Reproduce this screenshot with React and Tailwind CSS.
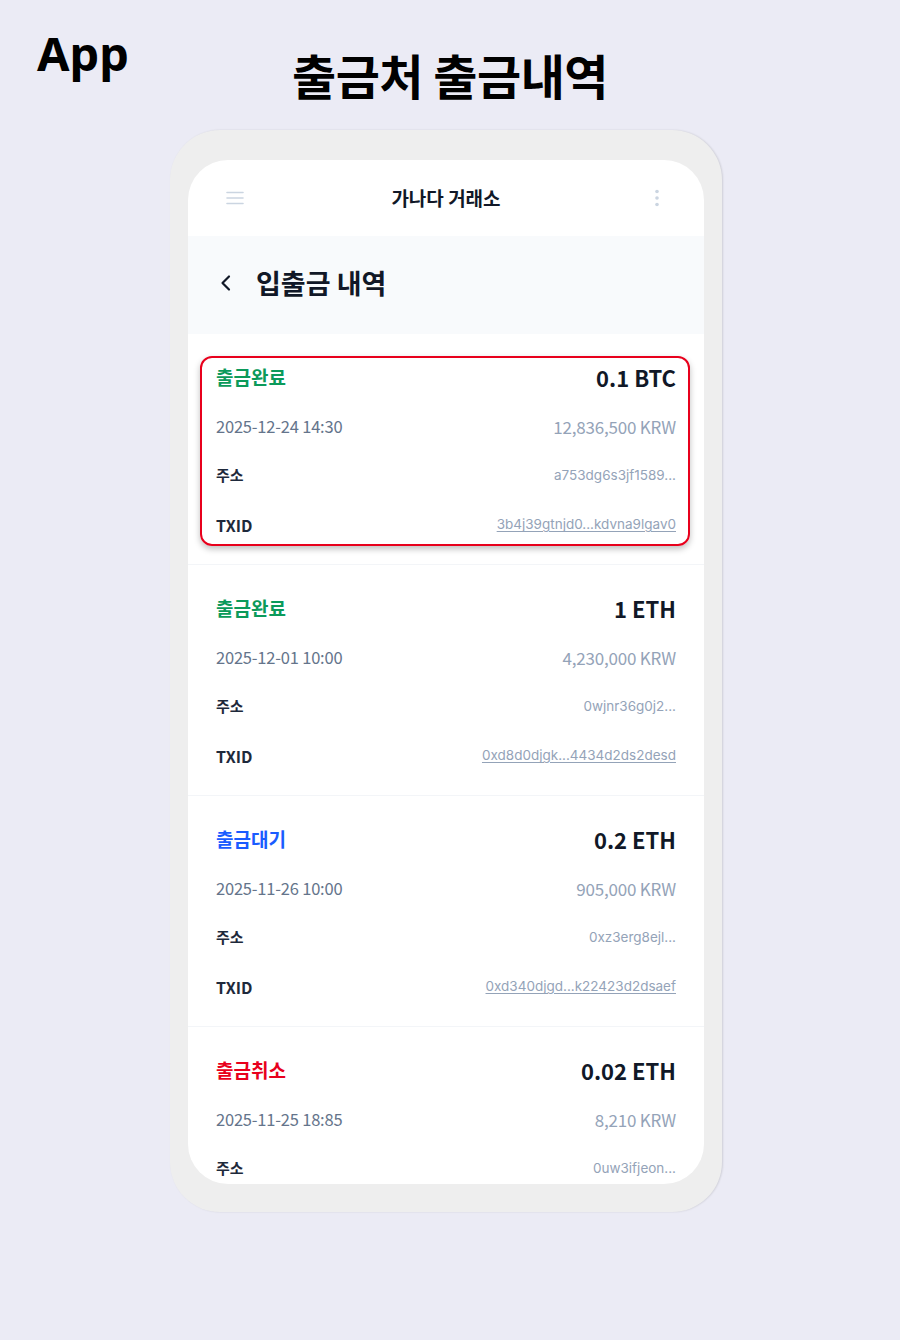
import React from 'react';

const items = [
  {
    status: '출금완료',
    statusClass: 'text-[#0b9a5a]',
    amount: '0.1 BTC',
    date: '2025-12-24 14:30',
    krw: '12,836,500 KRW',
    address: 'a753dg6s3jf1589...',
    txid: '3b4j39gtnjd0...kdvna9lgav0',
    highlight: true,
  },
  {
    status: '출금완료',
    statusClass: 'text-[#0b9a5a]',
    amount: '1 ETH',
    date: '2025-12-01 10:00',
    krw: '4,230,000 KRW',
    address: '0wjnr36g0j2...',
    txid: '0xd8d0djgk...4434d2ds2desd',
  },
  {
    status: '출금대기',
    statusClass: 'text-[#1a5cff]',
    amount: '0.2 ETH',
    date: '2025-11-26 10:00',
    krw: '905,000 KRW',
    address: '0xz3erg8ejl...',
    txid: '0xd340djgd...k22423d2dsaef',
  },
  {
    status: '출금취소',
    statusClass: 'text-[#e8001c]',
    amount: '0.02 ETH',
    date: '2025-11-25 18:85',
    krw: '8,210 KRW',
    address: '0uw3ifjeon...',
    txid: '0xa1b2c3d4...e5f6a7b8c9d0',
  },
];

const kr = "font-['Noto_Sans_CJK_KR',sans-serif]";
const latin = "font-['Inter','Noto_Sans_CJK_KR',sans-serif]";

const HistoryItem = ({ item }) => (
  <div className="relative px-7 pt-[19px] pb-[15px] border-b border-[#f3f5f8]">
    {item.highlight && (
      <div className="absolute left-3 right-[14px] top-[22px] bottom-[18px] rounded-xl border-2 border-[#e8001c] shadow-[0_3px_6px_rgba(0,0,0,0.25)] pointer-events-none" />
    )}
    <div className="h-[49px] flex items-center justify-between">
      <span className={`${kr} text-[19px] font-bold ${item.statusClass}`}>{item.status}</span>
      <span className={`${kr} text-[22px] font-bold text-[#111827]`}>{item.amount}</span>
    </div>
    <div className="h-[49px] flex items-center justify-between">
      <span className={`${kr} text-[16.5px] text-[#64748b] tracking-[-0.2px]`}>{item.date}</span>
      <span className={`${kr} text-[17px] text-[#94a3b8] tracking-[-0.2px]`}>{item.krw}</span>
    </div>
    <div className="h-[49px] flex items-center justify-between">
      <span className={`${kr} text-[15px] font-bold text-[#1e293b]`}>주소</span>
      <span className={`${latin} text-[13.5px] text-[#94a3b8]`}>{item.address}</span>
    </div>
    <div className="h-[49px] flex items-center justify-between">
      <span className={`${kr} text-[16px] font-bold text-[#1e293b]`}>TXID</span>
      <span className={`${latin} text-[13.5px] text-[#94a3b8] underline underline-offset-2`}>{item.txid}</span>
    </div>
  </div>
);

const App = () => {
  return (
    <div className={`min-h-[1340px] w-full bg-[#ebebf5] ${kr}`}>
      <div className="grid grid-cols-[1fr_auto_1fr] h-[130px]">
        <div className="pl-[37px] pt-[30px] text-[47px] font-bold text-black leading-none font-['Noto_Sans','Noto_Sans_CJK_KR',sans-serif]">
          App
        </div>
        <div className="pt-[50px] text-[48px] font-bold text-black leading-none tracking-[-0.5px]">
          출금처 출금내역
        </div>
        <div />
      </div>

      <div className="pl-[170px]">
        <div className="w-[552px] h-[1082px] rounded-[50px] bg-[#eeeeee] pt-[30px] px-[18px] shadow-[1px_0_2px_rgba(0,0,0,0.12)]">
          <div className="h-[1024px] rounded-[40px] bg-white overflow-hidden flex flex-col">
            <div className="h-[76px] shrink-0 flex items-center justify-between px-[38px]">
              <svg width="18" height="14" viewBox="0 0 18 14" className="text-[#cbd5e1]">
                <path d="M1 1.5h16M1 7h16M1 12.5h16" stroke="currentColor" strokeWidth="1.6" strokeLinecap="round" />
              </svg>
              <span className="text-[19px] font-semibold text-[#111827]">가나다 거래소</span>
              <svg width="18" height="18" viewBox="0 0 18 18" className="text-[#cbd5e1]">
                <circle cx="9" cy="2.5" r="1.8" fill="currentColor" />
                <circle cx="9" cy="9" r="1.8" fill="currentColor" />
                <circle cx="9" cy="15.5" r="1.8" fill="currentColor" />
              </svg>
            </div>
            <div className="h-[98px] shrink-0 bg-[#f8fafc] flex items-center px-7 pb-1 gap-5">
              <svg width="20" height="20" viewBox="0 0 20 20" className="text-[#111827]">
                <path d="M13 3.5L6.5 10l6.5 6.5" fill="none" stroke="currentColor" strokeWidth="2.2" strokeLinecap="round" strokeLinejoin="round" />
              </svg>
              <span className="text-[27px] font-bold text-[#111827]">입출금 내역</span>
            </div>
            <div className="flex-1">
              {items.map((item, index) => (
                <HistoryItem key={index} item={item} />
              ))}
            </div>
          </div>
        </div>
      </div>
    </div>
  );
};

export default App;
